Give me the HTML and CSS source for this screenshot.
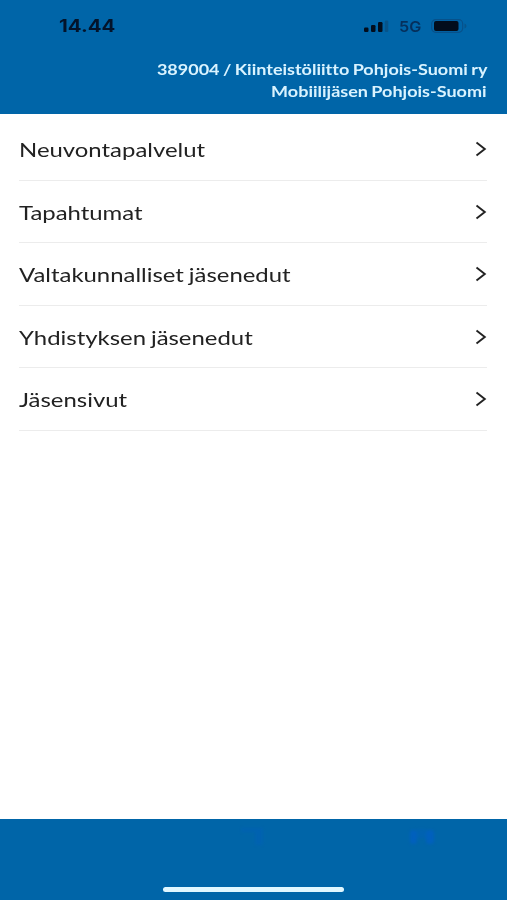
FILE: index.html
```html
<!DOCTYPE html>
<html lang="fi">
<head>
  <meta charset="UTF-8" />
  <meta name="viewport" content="width=device-width, initial-scale=1.0" />
  <title>Kiinteistöliitto</title>
  <link rel="stylesheet" href="styles.css">
</head>
<body>
  <header>
    <div class="status-bar">
      <span class="clock">14.44</span>
      <div class="status-icons">
        <svg class="signal" width="26" height="14" viewBox="0 0 26 14">
          <rect x="1" y="8.5" width="4.5" height="4.5" rx="1.2" />
          <rect x="8" y="6" width="4.5" height="7" rx="1.2" />
          <rect x="15" y="3" width="4.5" height="10" rx="1.2" />
          <rect class="faded" x="21.8" y="1.5" width="3.5" height="11.5" rx="1.2" />
        </svg>
        <span class="network">5G</span>
        <svg class="battery" width="36" height="14" viewBox="0 0 36 14">
          <rect class="outline" x="0.7" y="0.7" width="31" height="12.6" rx="4" />
          <rect x="3" y="2" width="24.5" height="10" rx="2" />
          <path class="faded" d="M33.5 4.5q2 .8 2 2.5t-2 2.5z" />
        </svg>
      </div>
    </div>
    <div class="account">
      <div><span>389004 / Kiinteistöliitto Pohjois-Suomi ry</span></div>
      <div><span>Mobiilijäsen Pohjois-Suomi</span></div>
    </div>
  </header>
  <main>
    <a class="row"><span>Neuvontapalvelut</span><svg class="arrow" viewBox="0 0 12 16"><path d="M1.5 1.5 9.8 8l-8.3 6.5" /></svg></a>
    <a class="row"><span>Tapahtumat</span><svg class="arrow" viewBox="0 0 12 16"><path d="M1.5 1.5 9.8 8l-8.3 6.5" /></svg></a>
    <a class="row"><span>Valtakunnalliset jäsenedut</span><svg class="arrow" viewBox="0 0 12 16"><path d="M1.5 1.5 9.8 8l-8.3 6.5" /></svg></a>
    <a class="row"><span>Yhdistyksen jäsenedut</span><svg class="arrow" viewBox="0 0 12 16"><path d="M1.5 1.5 9.8 8l-8.3 6.5" /></svg></a>
    <a class="row"><span>Jäsensivut</span><svg class="arrow" viewBox="0 0 12 16"><path d="M1.5 1.5 9.8 8l-8.3 6.5" /></svg></a>
  </main>
  <footer>
    <div class="tabs">
      <span></span>
      <svg class="tab-icon dim" width="28" height="22" viewBox="0 0 28 22"><path d="M1 2h22v4H1zM15 6h8v13h-8z" /></svg>
      <svg class="tab-icon" width="28" height="22" viewBox="0 0 28 22"><rect x="1" y="4" width="7" height="14" rx="3" /><rect x="17" y="4" width="8" height="14" rx="3" /><path class="bridge" d="M8 3h9v9H8z" /></svg>
    </div>
    <div class="home-indicator"></div>
  </footer>
</body>
</html>
```

FILE: styles.css
```css
body {
  background-color: #fff;
  color: #222;
  font-family: Lato, sans-serif;
  font-variant-ligatures: none;
  margin: 0;
  min-height: 900px;
  display: flex;
  flex-direction: column;
}

/* Header */
header {
  background-color: #0065a8;
  height: 114px;
}
.status-bar {
  display: flex;
  justify-content: space-between;
  align-items: center;
  height: 52px;
  padding: 0 40px 0 59px;
  color: #03142b;
}
.clock {
  font-family: Inter, sans-serif;
  font-size: 17px;
  font-weight: 700;
  transform: scaleX(1.2);
  transform-origin: left;
}
.status-icons {
  display: flex;
  align-items: center;
}
.network {
  font-family: Inter, sans-serif;
  font-size: 15px;
  font-weight: 600;
  color: #05305c;
  width: 23px;
  margin: 0 9px 0 10px;
  transform: scaleX(1.08);
  transform-origin: left;
}
.signal,
.battery {
  fill: #020d1c;
}
.faded {
  fill: #07548a;
}
.outline {
  fill: none;
  stroke: #07518a;
  stroke-width: 1.2;
}
.account {
  padding: 7px 20px 0 0;
  color: #d9f3ff;
  font-size: 15px;
  font-weight: 700;
  line-height: 21.5px;
  text-align: right;
}
.account span {
  display: inline-block;
  word-spacing: -0.8px;
  transform: scaleX(1.2);
  transform-origin: right;
}

/* Menu list */
main {
  flex: 1;
  padding: 4.4px 20px 0 19px;
}
.row {
  display: flex;
  justify-content: space-between;
  align-items: center;
  box-sizing: border-box;
  height: 62.5px;
  border-bottom: 1px solid #ececec;
  font-size: 20px;
}
.row span {
  word-spacing: -1px;
  transform: scaleX(1.195);
  transform-origin: left;
}
.arrow {
  width: 12px;
  height: 16px;
  fill: none;
  stroke: #222;
  stroke-width: 1.9;
}

/* Bottom bar */
footer {
  display: flex;
  flex-direction: column;
  justify-content: space-between;
  align-items: center;
  box-sizing: border-box;
  height: 81px;
  padding: 7px 0 8px;
  background-color: #0065a8;
}
.tabs {
  display: grid;
  grid-template-columns: repeat(3, 1fr);
  justify-items: center;
  width: 100%;
}
.tab-icon {
  fill: #0060bd;
  filter: blur(1.5px);
}
.dim {
  fill: #0062b0;
}
.bridge {
  opacity: 0.4;
}
.home-indicator {
  width: 181px;
  height: 5px;
  border-radius: 3px;
  background-color: #e0f7ff;
}
```
